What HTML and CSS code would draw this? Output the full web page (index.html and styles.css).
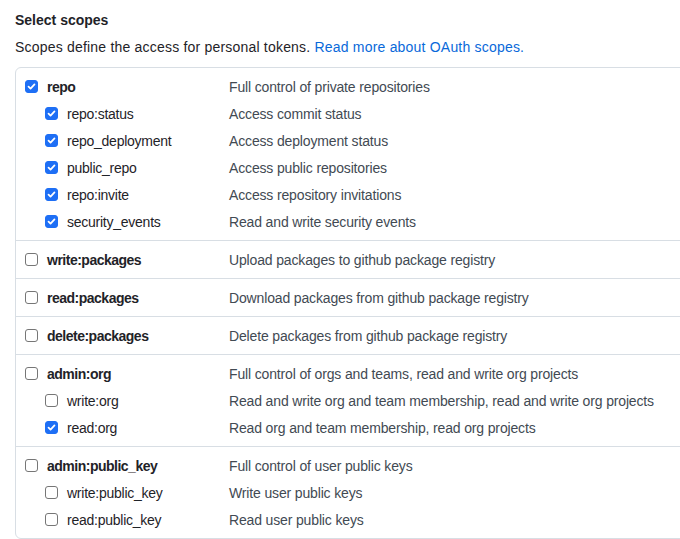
FILE: index.html
```html
<!DOCTYPE html>
<html>
<head>
<meta charset="utf-8">
<link rel="stylesheet" href="styles.css">
</head>
<body>
<h3 class="title">Select scopes</h3>
<p class="lead">Scopes define the access for personal tokens. <a href="#">Read more about OAuth scopes.</a></p>
<div class="scopes">
  <div class="group">
    <div class="row parent"><span class="name"><span class="cb on"><svg viewBox="0 0 14 14"><path d="M3.2 7.2l2.6 2.6 5-5.6"/></svg></span>repo</span><span class="desc">Full control of private repositories</span></div>
    <div class="row child"><span class="name"><span class="cb on"><svg viewBox="0 0 14 14"><path d="M3.2 7.2l2.6 2.6 5-5.6"/></svg></span>repo:status</span><span class="desc">Access commit status</span></div>
    <div class="row child"><span class="name"><span class="cb on"><svg viewBox="0 0 14 14"><path d="M3.2 7.2l2.6 2.6 5-5.6"/></svg></span>repo_deployment</span><span class="desc">Access deployment status</span></div>
    <div class="row child"><span class="name"><span class="cb on"><svg viewBox="0 0 14 14"><path d="M3.2 7.2l2.6 2.6 5-5.6"/></svg></span>public_repo</span><span class="desc">Access public repositories</span></div>
    <div class="row child"><span class="name"><span class="cb on"><svg viewBox="0 0 14 14"><path d="M3.2 7.2l2.6 2.6 5-5.6"/></svg></span>repo:invite</span><span class="desc">Access repository invitations</span></div>
    <div class="row child"><span class="name"><span class="cb on"><svg viewBox="0 0 14 14"><path d="M3.2 7.2l2.6 2.6 5-5.6"/></svg></span>security_events</span><span class="desc">Read and write security events</span></div>
  </div>
  <div class="group">
    <div class="row parent"><span class="name"><span class="cb"></span>write:packages</span><span class="desc">Upload packages to github package registry</span></div>
  </div>
  <div class="group">
    <div class="row parent"><span class="name"><span class="cb"></span>read:packages</span><span class="desc">Download packages from github package registry</span></div>
  </div>
  <div class="group">
    <div class="row parent"><span class="name"><span class="cb"></span>delete:packages</span><span class="desc">Delete packages from github package registry</span></div>
  </div>
  <div class="group">
    <div class="row parent"><span class="name"><span class="cb"></span>admin:org</span><span class="desc">Full control of orgs and teams, read and write org projects</span></div>
    <div class="row child"><span class="name"><span class="cb"></span>write:org</span><span class="desc">Read and write org and team membership, read and write org projects</span></div>
    <div class="row child"><span class="name"><span class="cb on"><svg viewBox="0 0 14 14"><path d="M3.2 7.2l2.6 2.6 5-5.6"/></svg></span>read:org</span><span class="desc">Read org and team membership, read org projects</span></div>
  </div>
  <div class="group">
    <div class="row parent"><span class="name"><span class="cb"></span>admin:public_key</span><span class="desc">Full control of user public keys</span></div>
    <div class="row child"><span class="name"><span class="cb"></span>write:public_key</span><span class="desc">Write user public keys</span></div>
    <div class="row child"><span class="name"><span class="cb"></span>read:public_key</span><span class="desc">Read user public keys</span></div>
  </div>
</div>
</body>
</html>
```
FILE: styles.css
```css
html, body {
  margin: 0;
  padding: 0;
  background: #ffffff;
}
body {
  font-family: "Liberation Sans", Arial, sans-serif;
  font-size: 14px;
  color: #1f2328;
  padding: 0 0 0 15px;
  overflow: hidden;
}
.title {
  margin: 0;
  padding-top: 10px;
  font-size: 14px;
  font-weight: 600;
  line-height: 20px;
}
.lead {
  margin: 7px 0 0 0;
  line-height: 20px;
  letter-spacing: 0.2px;
}
.lead a {
  color: #0969da;
  text-decoration: none;
}
.scopes {
  margin-top: 10px;
  margin-right: -10px;
  border: 1px solid #d8dee4;
  border-radius: 6px 0 0 6px;
}
.group {
  display: flex;
  flex-direction: column;
  gap: 6px;
  padding: 8px 0 8px 9px;
  border-top: 1px solid #d8dee4;
}
.group:first-child {
  border-top: none;
}
.row {
  display: grid;
  grid-template-columns: 204px 1fr;
  height: 21px;
  align-items: center;
}
.name {
  display: flex;
  align-items: center;
  letter-spacing: -0.25px;
}
.parent .name {
  font-weight: 700;
  letter-spacing: -0.5px;
}
.child .name {
  padding-left: 20px;
}
.desc {
  color: #424a53;
  letter-spacing: -0.15px;
  white-space: nowrap;
}
.cb {
  box-sizing: border-box;
  width: 13px;
  height: 13px;
  margin-right: 9px;
  border: 1px solid #767676;
  border-radius: 3px;
  background: #ffffff;
  flex: none;
  display: flex;
}
.cb.on {
  background: #1e6ff5;
  border-color: #1e6ff5;
}
.cb svg {
  width: 11px;
  height: 11px;
  fill: none;
  stroke: #ffffff;
  stroke-width: 2.2;
  stroke-linecap: round;
  stroke-linejoin: round;
}
```
